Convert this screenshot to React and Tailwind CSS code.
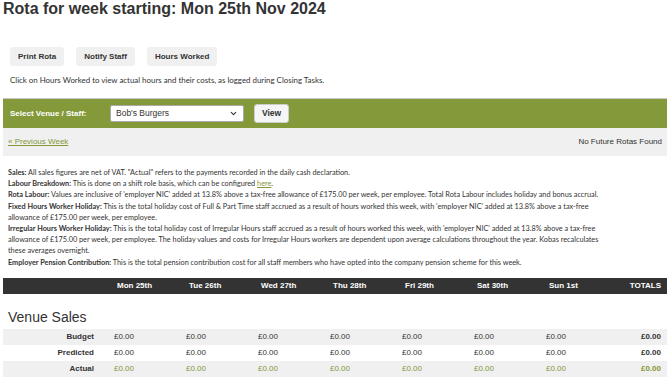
import { ChevronDown } from 'lucide-react';

const days = ['Mon 25th', 'Tue 26th', 'Wed 27th', 'Thu 28th', 'Fri 29th', 'Sat 30th', 'Sun 1st'];

const rows = [
  { label: 'Budget', tone: 'text-[#333]', bg: 'bg-[#f0f0f0]' },
  { label: 'Predicted', tone: 'text-[#333]', bg: 'bg-white' },
  { label: 'Actual', tone: 'text-[#84993a]', bg: 'bg-[#f0f0f0]' },
];

function App() {
  return (
    <div className="min-h-screen bg-white text-[#333] font-['Liberation_Sans',Arial,sans-serif] px-[3px] overflow-hidden">
      <h1 className="text-[16px] leading-[18px] font-bold">Rota for week starting: Mon 25th Nov 2024</h1>

      <div className="flex gap-3 pl-[7px] mt-[29px]">
        {['Print Rota', 'Notify Staff', 'Hours Worked'].map((b) => (
          <button key={b} className="h-[19px] px-[8px] rounded-[3px] bg-[#f0f0f0] text-[8px] font-bold text-[#333]">
            {b}
          </button>
        ))}
      </div>

      <p className="pl-[7px] mt-[9px] text-[7.9px] leading-[10px] font-['Lato',sans-serif]">
        Click on Hours Worked to view actual hours and their costs, as logged during Closing Tasks.
      </p>

      <div className="mt-[13px] h-[30px] bg-[#84993a] border-t border-[#c8c8c8] flex items-center pl-[7px]">
        <span className="w-[100px] text-white text-[8px] font-bold">Select Venue / Staff:</span>
        <div className="w-[134px] h-[17px] bg-white border border-[#aaa] rounded-[2px] flex items-center justify-between px-[5px] text-[8.5px]">
          <span>Bob's Burgers</span>
          <ChevronDown size={9} strokeWidth={3} />
        </div>
        <button className="ml-[10px] w-[35px] h-[19px] rounded-[3px] bg-[#f5f5f5] border border-[#ccc] text-[8.5px] font-bold">View</button>
      </div>

      <div className="h-[28px] bg-[#f0f0f0] flex items-center justify-between px-[5px] text-[8px]">
        <a className="text-[#84993a] underline">« Previous Week</a>
        <span>No Future Rotas Found</span>
      </div>

      {/* notes block, line breaks kept as in the page */}
      <div className="mt-[11px] px-[5px] text-[7.3px] leading-[11.2px] font-['Lato',sans-serif]">
        <p><b>Sales:</b> All sales figures are net of VAT. "Actual" refers to the payments recorded in the daily cash declaration.</p>
        <p><b>Labour Breakdown:</b> This is done on a shift role basis, which can be configured <a className="text-[#84993a] underline">here</a>.</p>
        <p><b>Rota Labour:</b> Values are inclusive of 'employer NIC' added at 13.8% above a tax-free allowance of £175.00 per week, per employee. Total Rota Labour includes holiday and bonus accrual.</p>
        <p>
          <b>Fixed Hours Worker Holiday:</b> This is the total holiday cost of Full &amp; Part Time staff accrued as a result of hours worked this week, with 'employer NIC' added at 13.8% above a tax-free<br />
          allowance of £175.00 per week, per employee.
        </p>
        <p>
          <b>Irregular Hours Worker Holiday:</b> This is the total holiday cost of Irregular Hours staff accrued as a result of hours worked this week, with 'employer NIC' added at 13.8% above a tax-free<br />
          allowance of £175.00 per week, per employee. The holiday values and costs for Irregular Hours workers are dependent upon average calculations throughout the year. Kobas recalculates<br />
          these averages overnight.
        </p>
        <p><b>Employer Pension Contribution:</b> This is the total pension contribution cost for all staff members who have opted into the company pension scheme for this week.</p>
      </div>

      <div className="mt-[10px] h-[16px] bg-[#333] text-white text-[8px] font-bold grid grid-cols-[110px_repeat(7,72px)_1fr] items-center">
        <span></span>
        {days.map((d) => (
          <span key={d} className="pl-[4px]">{d}</span>
        ))}
        <span className="text-right pr-[6px]">TOTALS</span>
      </div>

      <h2 className="mt-[14px] pl-[5px] text-[14px] leading-[18px]">Venue Sales</h2>

      <div className="mt-[3px] text-[8px]">
        {rows.map((r) => (
          <div key={r.label} className={`h-[16px] grid grid-cols-[110px_repeat(7,72px)_1fr] items-center ${r.bg}`}>
            <span className="text-right pr-[19px] font-bold text-[#333]">{r.label}</span>
            {days.map((d) => (
              <span key={d} className={`pl-[1px] ${r.tone}`}>£0.00</span>
            ))}
            <span className={`text-right pr-[6px] font-bold ${r.tone}`}>£0.00</span>
          </div>
        ))}
      </div>
    </div>
  );
}

export default App;
